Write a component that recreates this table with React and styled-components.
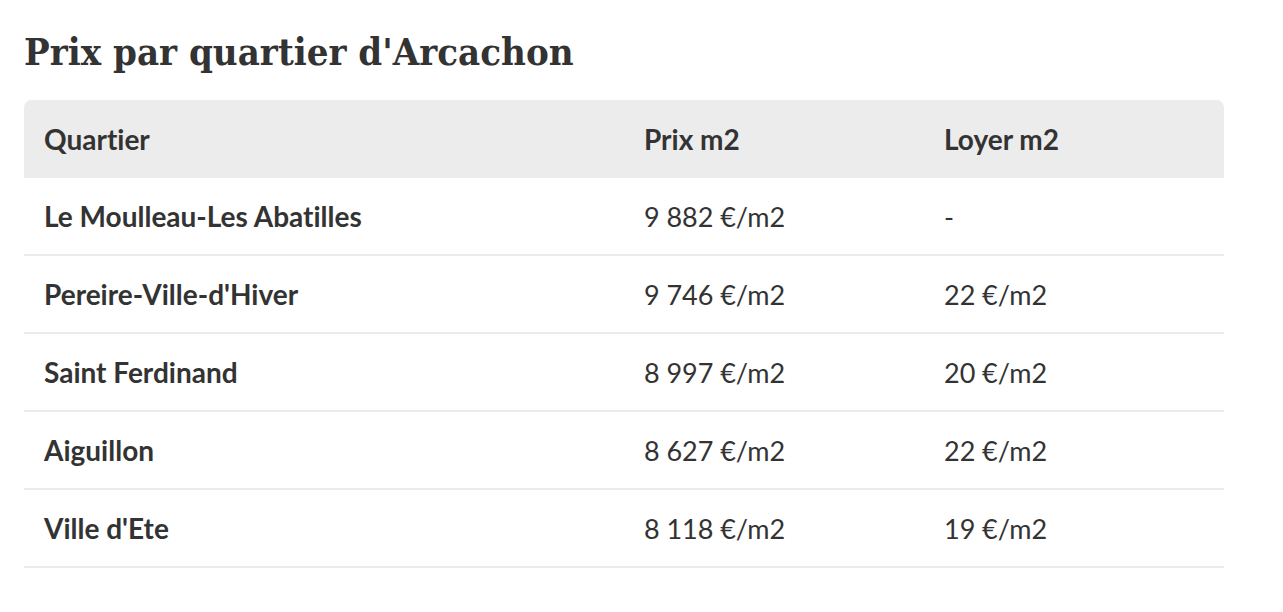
import React from "react";
import styled, { createGlobalStyle } from "styled-components";

const GlobalStyle = createGlobalStyle`
  body {
    margin: 0;
    background: #ffffff;
    color: #333333;
    font-family: "Lato", "Noto Sans", sans-serif;
  }
`;

const Page = styled.div`
  padding: 28px 24px 0 24px;
  width: 1200px;
`;

const Title = styled.h2`
  margin: 0 0 24px 0;
  font-family: "DejaVu Serif", "Liberation Serif", serif;
  font-stretch: condensed;
  font-weight: 700;
  font-size: 38px;
  line-height: 48px;
  color: #333333;
`;

const Table = styled.table`
  width: 100%;
  table-layout: fixed;
  border-collapse: separate;
  border-spacing: 0;
  font-size: 28px;
  font-variant-ligatures: none;
`;

const HeadCell = styled.th`
  box-sizing: border-box;
  background: #ececec;
  text-align: left;
  font-weight: 700;
  height: 78px;
  padding: 0 20px;
  width: ${(p) => p.$width};

  &:first-child {
    border-top-left-radius: 8px;
  }
  &:last-child {
    border-top-right-radius: 8px;
  }
`;

const Cell = styled.td`
  height: 76px;
  padding: 0 20px;
  border-bottom: 2px solid #ebebeb;
  font-weight: ${(p) => (p.$bold ? 700 : 400)};
  font-size: ${(p) => (p.$bold ? "28px" : "27px")};
`;

const rows = [
  ["Le Moulleau-Les Abatilles", "9\u202F882\u202F€/m2", "-"],
  ["Pereire-Ville-d'Hiver", "9\u202F746\u202F€/m2", "22\u202F€/m2"],
  ["Saint Ferdinand", "8\u202F997\u202F€/m2", "20\u202F€/m2"],
  ["Aiguillon", "8\u202F627\u202F€/m2", "22\u202F€/m2"],
  ["Ville d'Ete", "8\u202F118\u202F€/m2", "19\u202F€/m2"],
];

export default function App() {
  return (
    <>
      <GlobalStyle />
      <Page>
        <Title>Prix par quartier d'Arcachon</Title>
        <Table>
          <thead>
            <tr>
              <HeadCell $width="50%">Quartier</HeadCell>
              <HeadCell $width="25%">Prix m2</HeadCell>
              <HeadCell $width="25%">Loyer m2</HeadCell>
            </tr>
          </thead>
          <tbody>
            {rows.map((r) => (
              <tr key={r[0]}>
                <Cell $bold>{r[0]}</Cell>
                <Cell>{r[1]}</Cell>
                <Cell>{r[2]}</Cell>
              </tr>
            ))}
          </tbody>
        </Table>
      </Page>
    </>
  );
}
